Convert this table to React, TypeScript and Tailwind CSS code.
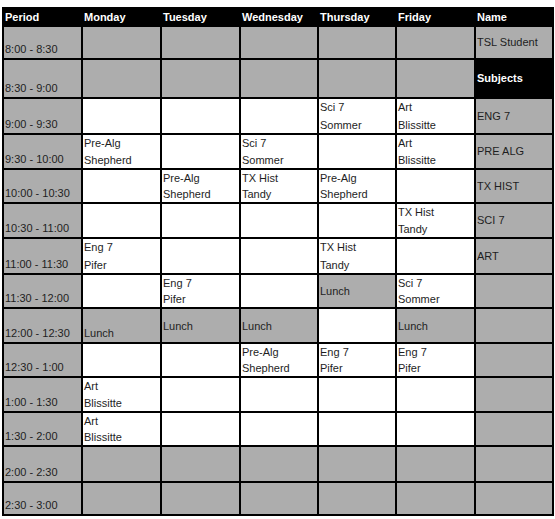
import React from "react";

type Cell =
  | { kind: "gray" }
  | { kind: "white" }
  | { kind: "two"; a: string; b: string }
  | { kind: "lunch"; align: "mid" | "bottom"; bg: "gray" | "white" };

const G: Cell = { kind: "gray" };
const W: Cell = { kind: "white" };
const t = (a: string, b: string): Cell => ({ kind: "two", a, b });
const L = (align: "mid" | "bottom" = "mid"): Cell => ({ kind: "lunch", align, bg: "gray" });

type Row = { period: string; h: string; cells: Cell[]; name: string | null; nameDark?: boolean };

const rows: Row[] = [
  { period: "8:00 - 8:30", h: "h-[31px]", cells: [G, G, G, G, G], name: "TSL Student" },
  { period: "8:30 - 9:00", h: "h-[37px]", cells: [G, G, G, G, G], name: "Subjects", nameDark: true },
  { period: "9:00 - 9:30", h: "h-[34px]", cells: [W, W, W, t("Sci 7", "Sommer"), t("Art", "Blissitte")], name: "ENG 7" },
  { period: "9:30 - 10:00", h: "h-[33px]", cells: [t("Pre-Alg", "Shepherd"), W, t("Sci 7", "Sommer"), W, t("Art", "Blissitte")], name: "PRE ALG" },
  { period: "10:00 - 10:30", h: "h-[32px]", cells: [W, t("Pre-Alg", "Shepherd"), t("TX Hist", "Tandy"), t("Pre-Alg", "Shepherd"), W], name: "TX HIST" },
  { period: "10:30 - 11:00", h: "h-[33px]", cells: [W, W, W, W, t("TX Hist", "Tandy")], name: "SCI 7" },
  { period: "11:00 - 11:30", h: "h-[34px]", cells: [t("Eng 7", "Pifer"), W, W, t("TX Hist", "Tandy"), W], name: "ART" },
  { period: "11:30 - 12:00", h: "h-[32px]", cells: [W, t("Eng 7", "Pifer"), W, L("mid"), t("Sci 7", "Sommer")], name: null },
  { period: "12:00 - 12:30", h: "h-[33px]", cells: [L("bottom"), L("mid"), L("mid"), W, L("mid")], name: null },
  { period: "12:30 - 1:00", h: "h-[32px]", cells: [W, W, t("Pre-Alg", "Shepherd"), t("Eng 7", "Pifer"), t("Eng 7", "Pifer")], name: null },
  { period: "1:00 - 1:30", h: "h-[33px]", cells: [t("Art", "Blissitte"), W, W, W, W], name: null },
  { period: "1:30 - 2:00", h: "h-[32px]", cells: [t("Art", "Blissitte"), W, W, W, W], name: null },
  { period: "2:00 - 2:30", h: "h-[34px]", cells: [G, G, G, G, G], name: null },
  { period: "2:30 - 3:00", h: "h-[31px]", cells: [G, G, G, G, G], name: null },
];

const headers = ["Period", "Monday", "Tuesday", "Wednesday", "Thursday", "Friday", "Name"];

function DayCell({ c, h }: { c: Cell; h: string }) {
  if (c.kind === "gray") return <div className={`${h} bg-[#adadad]`} />;
  if (c.kind === "white") return <div className={`${h} bg-white`} />;
  if (c.kind === "two")
    return (
      <div className={`${h} bg-white flex flex-col justify-between pl-[1px] leading-[16px]`}>
        <span>{c.a}</span>
        <span>{c.b}</span>
      </div>
    );
  return (
    <div
      className={`${h} bg-[#adadad] flex pl-[1px] leading-[16px] ${
        c.align === "mid" ? "items-center" : "items-end pb-[1px]"
      }`}
    >
      <span>Lunch</span>
    </div>
  );
}

export default function App() {
  return (
    <div
      className="w-[555px] h-[519px] bg-white pt-[7px] pl-[2px] text-[11px] text-[#1e1e1e]"
      style={{ fontFamily: '"Liberation Sans", Arial, sans-serif' }}
    >
      <div className="inline-grid grid-cols-[77px_77px_77px_76px_76px_77px_76px] gap-[2px] p-[2px] bg-black">
        {headers.map((hd) => (
          <div key={hd} className="h-[16px] bg-black text-white font-bold flex items-center pl-[1px] leading-[16px]">
            {hd}
          </div>
        ))}
        {rows.map((r) => (
          <React.Fragment key={r.period}>
            <div className={`${r.h} bg-[#adadad] flex items-end pl-[1px] leading-[16px] pb-[1px]`}>
              <span>{r.period}</span>
            </div>
            {r.cells.map((c, i) => (
              <DayCell key={i} c={c} h={r.h} />
            ))}
            {r.name === null ? (
              <div className={`${r.h} bg-[#adadad]`} />
            ) : r.nameDark ? (
              <div className={`${r.h} bg-black text-white font-bold flex items-center pl-[1px]`}>
                {r.name}
              </div>
            ) : (
              <div className={`${r.h} bg-[#adadad] flex items-center pl-[1px]`}>{r.name}</div>
            )}
          </React.Fragment>
        ))}
      </div>
    </div>
  );
}
